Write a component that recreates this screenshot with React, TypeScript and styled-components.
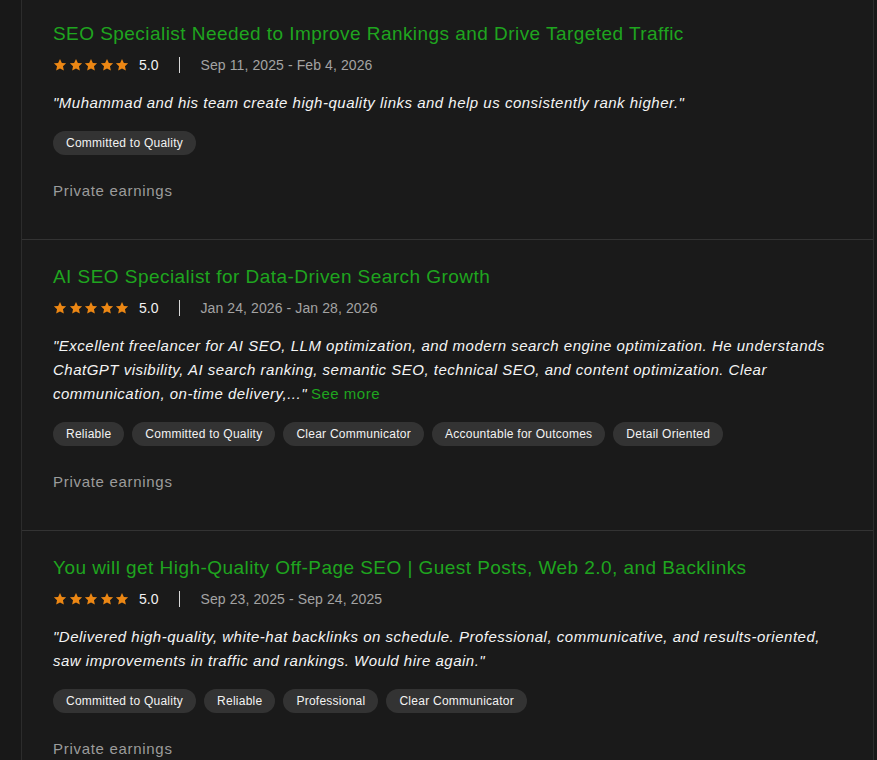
import React from "react";
import styled, { createGlobalStyle } from "styled-components";

const GlobalStyle = createGlobalStyle`
  html, body {
    margin: 0;
    padding: 0;
    background-color: #181818;
  }
  body {
    font-family: "Liberation Sans", Arial, sans-serif;
    color: #f2f2f2;
  }
`;

const Page = styled.div`
  height: 760px;
  overflow: hidden;
`;

const List = styled.div`
  margin: -3px 0 0 21px;
  width: 853px;
  box-sizing: border-box;
  background-color: #1a1a1a;
  border-left: 1px solid #2c2c2c;
  border-right: 1px solid #2c2c2c;
`;

const Item = styled.section`
  padding: 24px 32px 37px 31px;
  border-bottom: 1px solid #333333;
`;

const Title = styled.a`
  display: block;
  font-size: 19px;
  line-height: 26px;
  color: #1fa51f;
  text-decoration: none;
  letter-spacing: 0.45px;
`;

const MetaRow = styled.div`
  display: flex;
  align-items: center;
  height: 20px;
  margin-top: 8px;
  font-size: 14px;
`;

const Stars = styled.div`
  display: flex;
  gap: 1.5px;
`;

const Score = styled.span`
  margin-left: 10px;
  color: #f2f2f2;
`;

const Separator = styled.span`
  width: 1px;
  height: 16px;
  background-color: #d8d8d8;
  margin: 0 20px 0 21px;
`;

const Dates = styled.span`
  color: #a3a3a3;
  letter-spacing: 0.1px;
`;

const Quote = styled.p`
  margin: 16px 0 0;
  font-size: 15px;
  line-height: 24px;
  font-style: italic;
  color: #f4f4f4;
  letter-spacing: 0.5px;
`;

const SeeMore = styled.span`
  font-style: normal;
  color: #1fa51f;
  padding-left: 4px;
`;

const Tags = styled.div`
  display: flex;
  flex-wrap: wrap;
  gap: 8px;
  margin-top: 16px;
`;

const Tag = styled.span`
  display: inline-flex;
  align-items: center;
  height: 24px;
  padding: 0 13px;
  border-radius: 12px;
  background-color: #333333;
  color: #f2f2f2;
  font-size: 12px;
  letter-spacing: 0.25px;
`;

const Earnings = styled.div`
  margin-top: 25px;
  font-size: 15px;
  line-height: 22px;
  color: #9c9c9c;
  letter-spacing: 0.7px;
`;

function Star() {
  return (
    <svg width="14" height="14" viewBox="0 0 24 24">
      <path
        d="M12 1.5l3.2 6.9 7.3.8-5.4 5 1.5 7.3L12 17.8l-6.6 3.7 1.5-7.3-5.4-5 7.3-.8z"
        fill="#ec8714"
      />
    </svg>
  );
}

type Review = {
  title: string;
  dates: string;
  quote: string;
  more?: boolean;
  tags: string[];
};

const reviews: Review[] = [
  {
    title: "SEO Specialist Needed to Improve Rankings and Drive Targeted Traffic",
    dates: "Sep 11, 2025 - Feb 4, 2026",
    quote:
      "\"Muhammad and his team create high-quality links and help us consistently rank higher.\"",
    tags: ["Committed to Quality"],
  },
  {
    title: "AI SEO Specialist for Data-Driven Search Growth",
    dates: "Jan 24, 2026 - Jan 28, 2026",
    quote:
      "\"Excellent freelancer for AI SEO, LLM optimization, and modern search engine optimization. He understands ChatGPT visibility, AI search ranking, semantic SEO, technical SEO, and content optimization. Clear communication, on-time delivery,...\"",
    more: true,
    tags: [
      "Reliable",
      "Committed to Quality",
      "Clear Communicator",
      "Accountable for Outcomes",
      "Detail Oriented",
    ],
  },
  {
    title:
      "You will get High-Quality Off-Page SEO | Guest Posts, Web 2.0, and Backlinks",
    dates: "Sep 23, 2025 - Sep 24, 2025",
    quote:
      "\"Delivered high-quality, white-hat backlinks on schedule. Professional, communicative, and results-oriented, saw improvements in traffic and rankings. Would hire again.\"",
    tags: ["Committed to Quality", "Reliable", "Professional", "Clear Communicator"],
  },
];

export default function App() {
  return (
    <Page>
      <GlobalStyle />
      <List>
        {reviews.map((r) => (
          <Item key={r.title}>
            <Title>{r.title}</Title>
            <MetaRow>
              <Stars>
                {[0, 1, 2, 3, 4].map((i) => (
                  <Star key={i} />
                ))}
              </Stars>
              <Score>5.0</Score>
              <Separator />
              <Dates>{r.dates}</Dates>
            </MetaRow>
            <Quote>
              {r.quote}
              {r.more && <SeeMore>See more</SeeMore>}
            </Quote>
            <Tags>
              {r.tags.map((t) => (
                <Tag key={t}>{t}</Tag>
              ))}
            </Tags>
            <Earnings>Private earnings</Earnings>
          </Item>
        ))}
      </List>
    </Page>
  );
}
